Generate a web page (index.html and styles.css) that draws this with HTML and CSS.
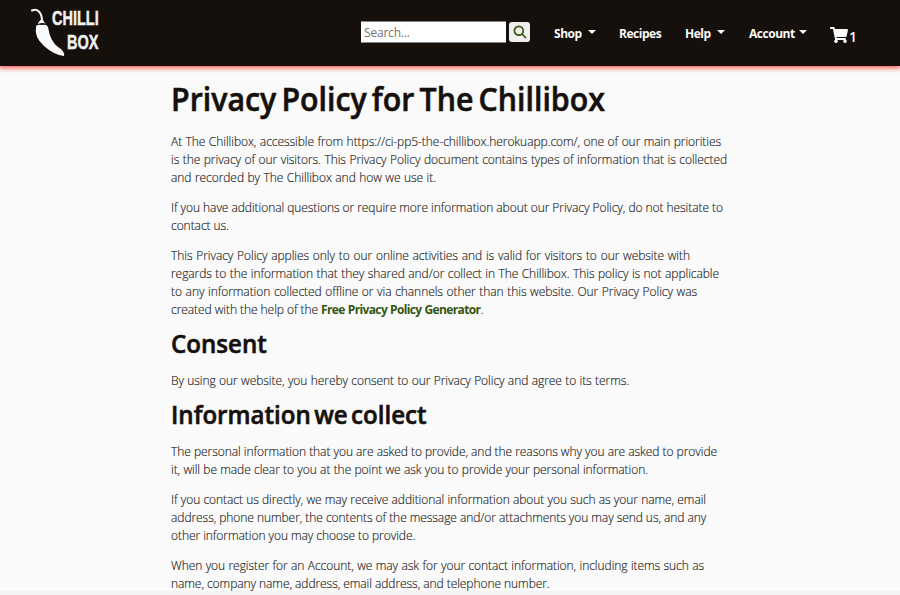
FILE: index.html
```html
<!DOCTYPE html>
<html lang="en">
<head>
<meta charset="utf-8">
<title>Privacy Policy - The Chillibox</title>
<link rel="stylesheet" href="styles.css">
</head>
<body>
<header class="navbar">
  <a class="logo">
    <svg class="chilli" viewBox="0 0 36 50" width="36" height="50"><path d="M2 3.500C7 1 12 5 12 14" fill="none" stroke="#fafafa" stroke-width="2" stroke-linecap="round"/><path d="M8 16Q9 15 10.500 13H13Q14 16 17 17Q12 15 8 17ZM6 20Q6 17 12 18Q17 17 18 20Q20 34 28 40Q35 44 34 49Q24 48 14 39Q4 30 6 20Z" fill="#fafafa"/></svg>
    <span class="brand"><span class="fit w-chilli">CHILLI</span><span class="fit w-box">BOX</span></span>
  </a>
  <form class="search"><input type="text" placeholder="Search..." aria-label="Search"><button type="button" aria-label="Go"><svg viewBox="0 0 14 14" width="14" height="14" fill="none" stroke="#345511" stroke-width="1.7"><circle cx="5.8" cy="5.8" r="4.4"/><path d="M9 9L13 13"/></svg></button></form>
  <nav class="links">
    <a class="shop">Shop<i class="caret"></i></a>
    <a class="recipes">Recipes</a>
    <a class="help">Help<i class="caret"></i></a>
    <a class="account">Account<i class="caret"></i></a>
    <a class="cart"><svg viewBox="0 0 576 512" width="18" height="16" fill="#fafafa"><path d="M528 301L575 93C579 78 567 64 552 64H159L150 19C148 8 138 0 126 0H24C11 0 0 11 0 24V40C0 53 11 64 24 64H94L164 408A56 56 0 1 0 231 416H441A56 56 0 1 0 504 406L510 381C513 366 502 352 486 352H218L211 320H505C516 320 526 312 528 301Z"/></svg><span>1</span></a>
  </nav>
</header>
<main class="content">
  <h1><span class="fit">Privacy Policy for The Chillibox</span></h1>
  <p><span class="l550">At The Chillibox, accessible from https://ci-pp5-the-chillibox.herokuapp.com/, one of our main priorities</span> <span class="l556">is the privacy of our visitors. This Privacy Policy document contains types of information that is collected</span> <span class="l265">and recorded by The Chillibox and how we use it.</span></p>
  <p><span class="l551">If you have additional questions or require more information about our Privacy Policy, do not hesitate to</span> <span class="l57">contact us.</span></p>
  <p><span class="l519">This Privacy Policy applies only to our online activities and is valid for visitors to our website with</span> <span class="l548">regards to the information that they shared and/or collect in The Chillibox. This policy is not applicable</span> <span class="l526">to any information collected offline or via channels other than this website. Our Privacy Policy was</span> <span class="l312">created with the help of the <a>Free Privacy Policy Generator</a>.</span></p>
  <h2><span class="fit">Consent</span></h2>
  <p><span class="l458">By using our website, you hereby consent to our Privacy Policy and agree to its terms.</span></p>
  <h2><span class="fit">Information we collect</span></h2>
  <p><span class="l546">The personal information that you are asked to provide, and the reasons why you are asked to provide</span> <span class="l477">it, will be made clear to you at the point we ask you to provide your personal information.</span></p>
  <p><span class="l535">If you contact us directly, we may receive additional information about you such as your name, email</span> <span class="l532">address, phone number, the contents of the message and/or attachments you may send us, and any</span> <span class="l242">other information you may choose to provide.</span></p>
  <p><span class="l533">When you register for an Account, we may ask for your contact information, including items such as</span> <span class="l376">name, company name, address, email address, and telephone number.</span></p>
</main>
<footer class="strip"></footer>
</body>
</html>
```

FILE: styles.css
```css
* { box-sizing: border-box; }
body { margin: 0; height: 595px; overflow: hidden; display: flex; flex-direction: column; background: #fafafa; color: #222; font: 300 12px/18px "Open Sans", sans-serif; }
.navbar { height: 66px; flex: none; display: flex; background: #15100c; box-shadow: 0 1px 5px 1px #f5534a; }
.logo { display: flex; width: 330px; flex: none; padding: 7px 0 0 30px; }
.brand { width: 34px; font: 700 21px/24px "Liberation Sans", sans-serif; color: #f0f0f0; margin: -1px 0 0 -14px; -webkit-text-stroke: .5px #f0f0f0; }
.brand .fit { display: block; transform-origin: 0 0; width: max-content; }
.w-chilli { transform: scaleX(.69); }
.w-box { transform: scaleX(.69); margin-left: 15px; }
.search { display: flex; margin: 21px 0 0 31px; height: 21px; }
.search input { width: 145px; height: 22px; padding: 0 3px; border: 1px solid #888; border-width: 1px 0; background: #fff; font: 400 12px "Open Sans", sans-serif; letter-spacing: -.2px; border-radius: 0; }
.search input::placeholder { color: #757575; opacity: 1; }
.search button { width: 21px; height: 20px; padding: 0; margin: 1px 0 0 3px; border: 0; border-radius: 3px; background: #f0f0f0; display: flex; align-items: center; justify-content: center; }
.links { display: flex; margin-left: 24px; padding-top: 25px; color: #fafafa; font-weight: 700; letter-spacing: -.48px; }
.links a { display: flex; flex: none; }
.shop { width: 65px; }
.recipes { width: 66px; }
.help { width: 64px; }
.account { width: 81px; }
.caret { border: 4px solid transparent; border-top-color: #fafafa; border-bottom: 0; height: 0; margin: 5px 0 0 6px; }
.account .caret { margin-left: 4px; }
.cart svg { margin-top: 2px; }
.cart span { font: 600 14px/18px "Open Sans", sans-serif; margin: 3px 0 0 1px; }
.content { flex: 1; min-height: 0; padding: 12px 0 0 171px; }
h1, h2 { margin: 0; color: #15100c; font-family: "Open Sans", sans-serif; font-weight: 600; white-space: nowrap; -webkit-text-stroke: .6px #15100c; }
h1 { font-size: 33px; line-height: 42px; margin-bottom: 13px; word-spacing: -3px; }
h2 { font-size: 25.5px; line-height: 25px; margin-bottom: 16px; word-spacing: -3px; }
h1 .fit { display: inline-block; transform-origin: 0 0; transform: scaleX(.919); }
h2 .fit { display: inline-block; transform-origin: 0 0; transform: scaleX(.945); }
p { margin: 0 0 12px; }
p span { display: block; height: 18px; white-space: nowrap; text-align-last: justify; letter-spacing: -.06px; -webkit-text-stroke: .15px #222; }
p a { color: #345511; font-weight: 700; letter-spacing: -.62px; word-spacing: .4px; -webkit-text-stroke: 0; }
.l550 { width: 550px; }
.l556 { width: 556px; }
.l265 { width: 265px; }
.l551 { width: 551px; }
.l57 { width: 57px; }
.l519 { width: 519px; }
.l548 { width: 548px; }
.l526 { width: 526px; }
.l312 { width: 312px; }
.l458 { width: 458px; }
.l546 { width: 546px; }
.l477 { width: 477px; }
.l535 { width: 535px; }
.l532 { width: 532px; }
.l242 { width: 242px; }
.l533 { width: 533px; }
.l376 { width: 376px; }
.strip { height: 4px; flex: none; background: #f3f3f3; }
```
